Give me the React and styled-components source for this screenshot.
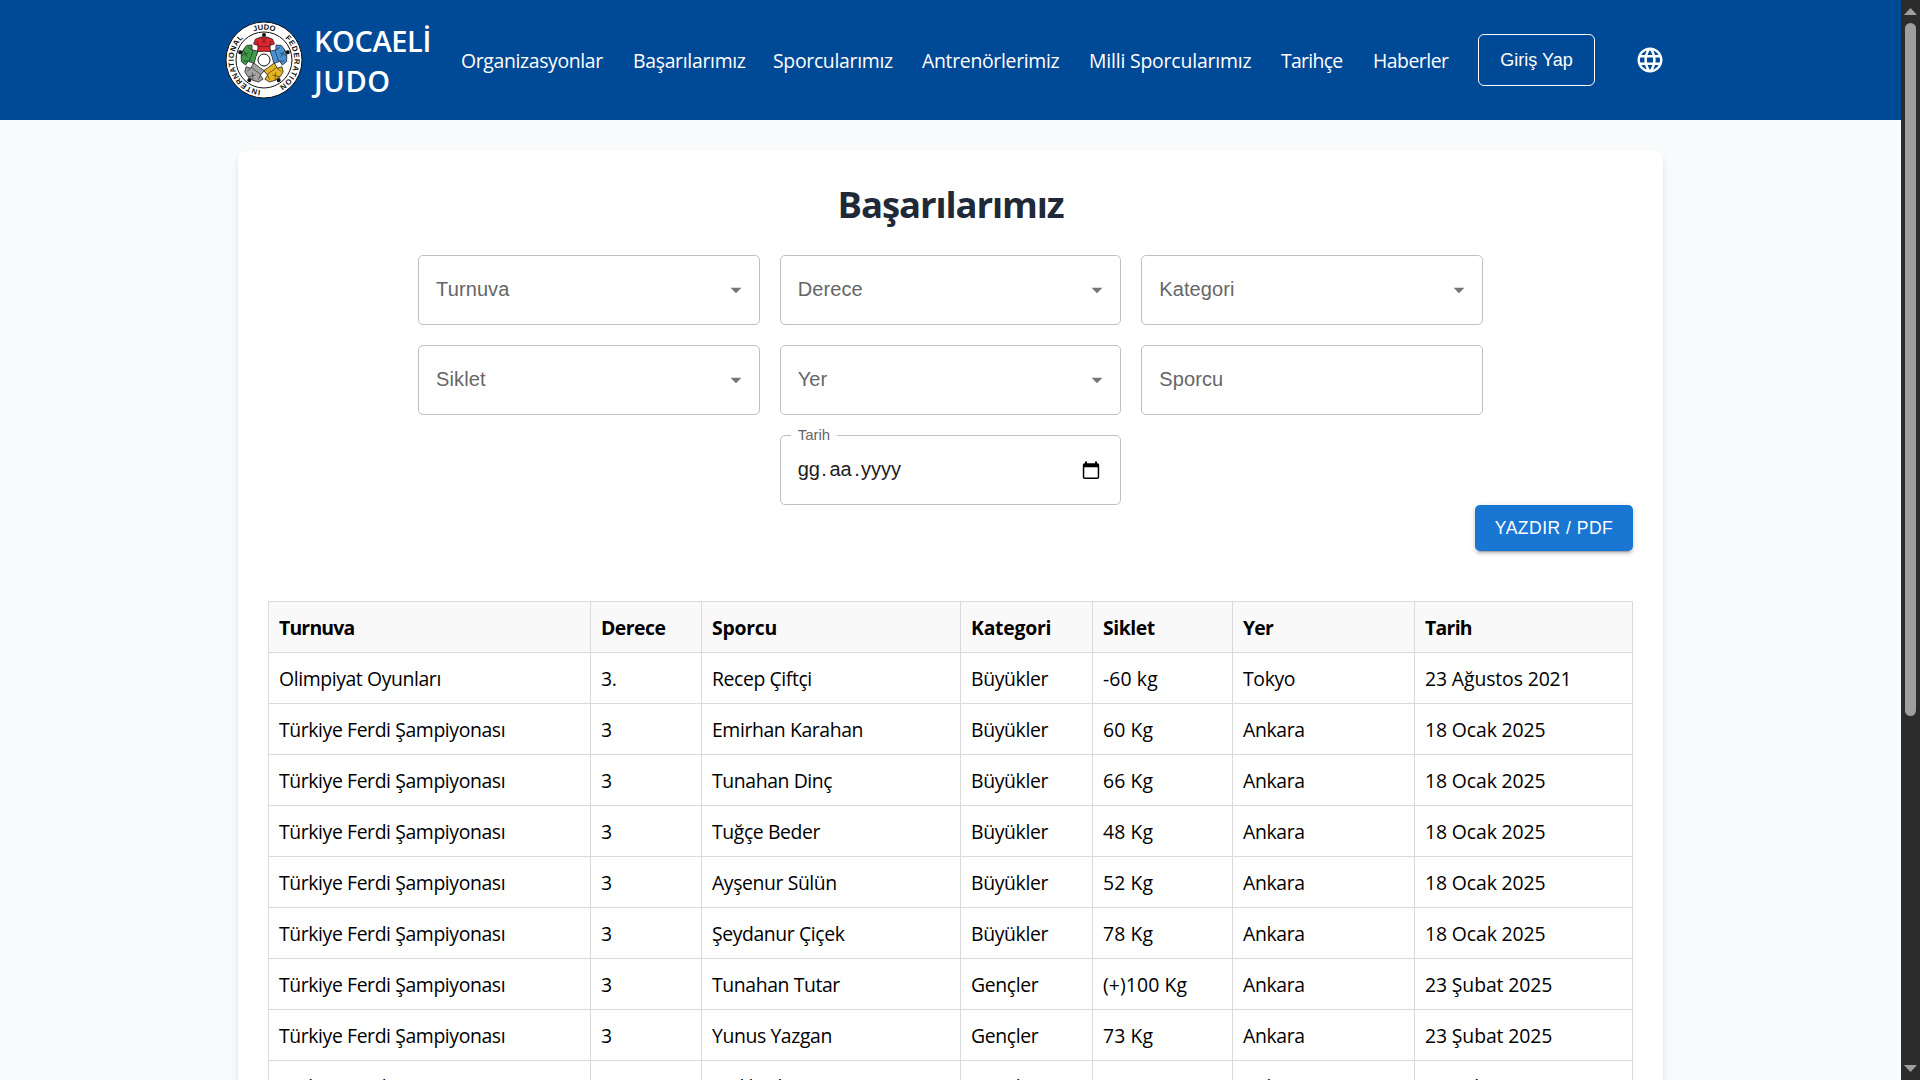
import React from "react";
import styled, { createGlobalStyle } from "styled-components";

const ui = `"Open Sans", "Noto Sans", sans-serif`;
const arial = `"Liberation Sans", Arial, sans-serif`;

const GlobalStyle = createGlobalStyle`
  *, *::before, *::after { box-sizing: border-box; }
  html, body { margin: 0; padding: 0; overflow: hidden; }
`;

const Window = styled.div`
  display: flex;
  width: 1920px;
  height: 1080px;
  overflow: hidden;
  font-family: ${ui};
`;

const Page = styled.div`
  flex: 1;
  min-width: 0;
  background: #f9fafc;
  overflow: hidden;
`;

const Header = styled.header`
  display: flex;
  align-items: center;
  height: 120px;
  padding-left: 225px;
  background: #004996;
  color: #fff;
`;

const Brand = styled.div`
  display: flex;
  align-items: center;
  gap: 11px;
  width: 236px;
`;

const BrandName = styled.div`
  display: flex;
  flex-direction: column;
  margin-top: 2px;
  font-size: 29px;
  font-weight: 600;
  line-height: 40px;
`;

const BrandLine = styled.span`
  letter-spacing: ${(p) => p.$spacing}px;
`;

const Nav = styled.nav`
  display: flex;
  gap: 30px;
  margin-top: 1px;
`;

const NavLink = styled.a`
  width: ${(p) => p.$width}px;
  font-size: 19.4px;
  line-height: 30px;
  letter-spacing: ${(p) => p.$spacing ?? -0.3}px;
  white-space: nowrap;
  color: #fff;
`;

const LoginButton = styled.button`
  width: 117px;
  height: 52px;
  margin-left: 30px;
  padding: 0;
  border: 1px solid #fff;
  border-radius: 6px;
  background: transparent;
  color: #fff;
  font: 400 18px ${arial};
`;

const Globe = styled.svg`
  width: 30px;
  height: 30px;
  margin-left: 40px;
  fill: #fff;
`;

const Card = styled.main`
  width: 1425px;
  height: 1400px;
  margin: 30px 0 0 238px;
  padding: 30px 30px 0;
  border-radius: 10px;
  background: #fff;
  box-shadow: 0 5px 8px -1px rgba(0, 0, 0, 0.1), 0 2px 5px -1px rgba(0, 0, 0, 0.06);
`;

const Title = styled.h1`
  margin: -1px 0 26px;
  font-size: 36.5px;
  font-weight: 700;
  line-height: 50px;
  letter-spacing: -1.1px;
  text-align: center;
  color: #1f2937;
`;

const Filters = styled.div`
  display: flex;
  flex-wrap: wrap;
  justify-content: center;
  gap: 20px;
  width: 1065px;
  margin: 0 auto;
`;

const Field = styled.div`
  position: relative;
  display: flex;
  align-items: center;
  justify-content: space-between;
  width: 341.6px;
  height: 70px;
  padding: 0 10px 0 17px;
  border: 1px solid #c0c0c0;
  border-radius: 5px;
  font-family: ${arial};
  font-size: 20px;
  line-height: 28px;
  color: #666;
`;

const FieldLabel = styled.span`
  margin-top: -2px;
  letter-spacing: 0.1px;
`;

const Arrow = styled.svg`
  width: 26px;
  height: 26px;
  fill: #757575;
`;

const FloatingLabel = styled.span`
  position: absolute;
  top: -10px;
  left: 10px;
  padding: 0 7px;
  background: #fff;
  font-size: 15px;
  line-height: 18px;
`;

const DateValue = styled.span`
  display: flex;
  margin-top: -2px;
  color: #212121;
`;

const DatePart = styled.span`
  padding: 0 1.3px;
`;

const CalendarIcon = styled.svg`
  width: 20px;
  height: 20px;
  margin-right: 9px;
`;

const Actions = styled.div`
  display: flex;
  justify-content: flex-end;
  height: 96px;
`;

const PrintButton = styled.button`
  width: 158px;
  height: 46px;
  padding: 0;
  border: 0;
  border-radius: 5px;
  background: #1976d2;
  box-shadow: 0 4px 1px -3px rgba(0, 0, 0, 0.2), 0 3px 3px rgba(0, 0, 0, 0.14), 0 1px 6px rgba(0, 0, 0, 0.12);
  color: #fff;
  font: 400 17.5px ${arial};
  letter-spacing: 0.5px;
`;

const Table = styled.table`
  width: 1364px;
  table-layout: fixed;
  border-collapse: collapse;
  font-size: 19.4px;
  line-height: 30px;
  color: #000;
`;

const Th = styled.th`
  height: 51px;
  padding: 2px 10px 0;
  border: 1px solid #dadada;
  background: #f9f9f9;
  font-weight: 700;
  letter-spacing: ${(p) => p.$spacing}px;
  text-align: left;
`;

const Td = styled.td`
  height: 51px;
  padding: 2px 10px 0;
  border: 1px solid #dadada;
  letter-spacing: ${(p) => p.$spacing}px;
  white-space: nowrap;
`;

const ScrollTrack = styled.div`
  display: flex;
  flex-direction: column;
  align-items: center;
  width: 19px;
  height: 1080px;
  padding: 8px 0;
  background: #2c2c2c;
`;

const ScrollThumb = styled.div`
  width: 11px;
  height: 693px;
  margin: 8px 0 auto;
  border-radius: 6px;
  background: #9f9f9f;
`;

const ScrollArrow = styled.svg`
  width: 13px;
  height: 7px;
  fill: #9f9f9f;
`;

const navItems = [
  { label: "Organizasyonlar", width: 142, spacing: -0.35 },
  { label: "Başarılarımız", width: 110 },
  { label: "Sporcularımız", width: 119 },
  { label: "Antrenörlerimiz", width: 137 },
  { label: "Milli Sporcularımız", width: 162, spacing: -0.18 },
  { label: "Tarihçe", width: 62, spacing: -0.7 },
  { label: "Haberler", width: 75, spacing: -0.5 },
];

const columns = [
  { name: "Turnuva", width: 322, head: -0.8, body: -0.4 },
  { name: "Derece", width: 111, head: -0.5, body: -0.25 },
  { name: "Sporcu", width: 259, head: -0.25, body: -0.4 },
  { name: "Kategori", width: 132, head: -0.25, body: -0.35 },
  { name: "Siklet", width: 140, head: -0.45, body: 0.1 },
  { name: "Yer", width: 182, head: -0.8, body: -0.35 },
  { name: "Tarih", width: 218, head: -0.7, body: -0.12 },
];

const champ = "Türkiye Ferdi Şampiyonası";
const rows = [
  ["Olimpiyat Oyunları", "3.", "Recep Çiftçi", "Büyükler", "-60 kg", "Tokyo", "23 Ağustos 2021"],
  [champ, "3", "Emirhan Karahan", "Büyükler", "60 Kg", "Ankara", "18 Ocak 2025"],
  [champ, "3", "Tunahan Dinç", "Büyükler", "66 Kg", "Ankara", "18 Ocak 2025"],
  [champ, "3", "Tuğçe Beder", "Büyükler", "48 Kg", "Ankara", "18 Ocak 2025"],
  [champ, "3", "Ayşenur Sülün", "Büyükler", "52 Kg", "Ankara", "18 Ocak 2025"],
  [champ, "3", "Şeydanur Çiçek", "Büyükler", "78 Kg", "Ankara", "18 Ocak 2025"],
  [champ, "3", "Tunahan Tutar", "Gençler", "(+)100 Kg", "Ankara", "23 Şubat 2025"],
  [champ, "3", "Yunus Yazgan", "Gençler", "73 Kg", "Ankara", "23 Şubat 2025"],
  [champ, "3", "Melikşah Demir", "Gençler", "81 Kg", "Ankara", "23 Şubat 2025"],
];

const athletes = [
  [0, "#d9252c"],
  [72, "#4b92d4"],
  [144, "#e2b322"],
  [216, "#a3a3a3"],
  [288, "#3f9b48"],
];

function Logo() {
  return (
    <svg width="78" height="78" viewBox="-39 -39 78 78">
      <circle r="38" fill="#fff" stroke="#111" strokeWidth="1" />
      <circle r="28" fill="none" stroke="#111" strokeWidth="1" />
      <path id="ring" d="M0 30.3 A30.3 30.3 0 0 1 0 -30.3 A30.3 30.3 0 0 1 0 30.3" fill="none" />
      <g fontFamily="Liberation Sans, Arial, sans-serif" fontSize="7.6" fontWeight="700" fill="#111">
        <text textLength="69"><textPath href="#ring" startOffset="3.4" textLength="69">INTERNATIONAL</textPath></text>
        <text textLength="21.5"><textPath href="#ring" startOffset="84.5" textLength="21.5">JUDO</textPath></text>
        <text textLength="56"><textPath href="#ring" startOffset="118" textLength="56">FEDERATION</textPath></text>
      </g>
      {athletes.map(([angle, color]) => (
        <g key={angle} transform={`rotate(${angle})`}>
          <path
            d="M-3 -23 L3 -23 L8.5 -21 L10.5 -16 L6 -14.5 L6.5 -8.5 L-6.5 -8.5 L-6 -14.5 L-10.5 -16 L-8.5 -21 Z"
            fill={color}
            stroke="#1a1a1a"
            strokeWidth=".7"
          />
          <path d="M-3 -23 L2 -17 M3 -23 L-2 -17 M-6 -13.5 H6 M-6 -14.5 L-7 -19 M6 -14.5 L7 -19" stroke="#1a1a1a" strokeWidth=".5" fill="none" />
          <circle cy="-25" r="2" fill="#111" />
        </g>
      ))}
      <circle r="8.2" fill="#fff" />
      <circle r="6" fill="#fff" stroke="#111" strokeWidth="1" />
    </svg>
  );
}

function SelectField({ label, plain }) {
  return (
    <Field>
      <FieldLabel>{label}</FieldLabel>
      {!plain && (
        <Arrow viewBox="0 0 24 24">
          <path d="M7 10l5 5 5-5z" />
        </Arrow>
      )}
    </Field>
  );
}

export default function App() {
  return (
    <Window>
      <GlobalStyle />
      <Page>
        <Header>
          <Brand>
            <Logo />
            <BrandName>
              <BrandLine $spacing={-0.4}>KOCAELİ</BrandLine>
              <BrandLine $spacing={0.6}>JUDO</BrandLine>
            </BrandName>
          </Brand>
          <Nav>
            {navItems.map((item) => (
              <NavLink key={item.label} $width={item.width} $spacing={item.spacing}>
                {item.label}
              </NavLink>
            ))}
          </Nav>
          <LoginButton>Giriş Yap</LoginButton>
          <Globe viewBox="0 0 24 24">
            <path d="M11.99 2C6.47 2 2 6.48 2 12s4.47 10 9.99 10C17.52 22 22 17.52 22 12S17.52 2 11.99 2zm6.93 6h-2.95c-.32-1.25-.78-2.45-1.38-3.56 1.84.63 3.37 1.91 4.33 3.56zM12 4.04c.83 1.2 1.48 2.53 1.91 3.96h-3.82c.43-1.43 1.08-2.76 1.91-3.96zM4.26 14C4.1 13.36 4 12.69 4 12s.1-1.36.26-2h3.38c-.08.66-.14 1.32-.14 2s.06 1.34.14 2H4.26zm.82 2h2.95c.32 1.25.78 2.45 1.38 3.56-1.84-.63-3.37-1.9-4.33-3.56zm2.95-8H5.08c.96-1.66 2.49-2.93 4.33-3.56C8.81 5.55 8.35 6.75 8.03 8zM12 19.96c-.83-1.2-1.48-2.53-1.91-3.96h3.82c-.43 1.43-1.08 2.76-1.91 3.96zM14.34 14H9.66c-.09-.66-.16-1.32-.16-2s.07-1.35.16-2h4.68c.09.65.16 1.32.16 2s-.07 1.34-.16 2zm.25 5.56c.6-1.11 1.06-2.31 1.38-3.56h2.95c-.96 1.65-2.49 2.93-4.33 3.56zM16.36 14c.08-.66.14-1.32.14-2s-.06-1.34-.14-2h3.38c.16.64.26 1.31.26 2s-.1 1.36-.26 2h-3.38z" />
          </Globe>
        </Header>
        <Card>
          <Title>Başarılarımız</Title>
          <Filters>
            <SelectField label="Turnuva" />
            <SelectField label="Derece" />
            <SelectField label="Kategori" />
            <SelectField label="Siklet" />
            <SelectField label="Yer" />
            <SelectField label="Sporcu" plain />
            <Field>
              <FloatingLabel>Tarih</FloatingLabel>
              <DateValue>
                <span>gg</span>
                <DatePart>.</DatePart>
                <DatePart>aa</DatePart>
                <DatePart>.</DatePart>
                <span>yyyy</span>
              </DateValue>
              <CalendarIcon viewBox="0 0 20 20">
                <path d="M4 1.5h2v1.7h8V1.5h2v1.7h.4A1.8 1.8 0 0 1 18.2 5v12.2a1.8 1.8 0 0 1-1.8 1.8H3.6a1.8 1.8 0 0 1-1.8-1.8V5a1.8 1.8 0 0 1 1.8-1.8H4zM3.3 7.2v10.3h13.4V7.2z" fill="#000" fillRule="evenodd" />
              </CalendarIcon>
            </Field>
          </Filters>
          <Actions>
            <PrintButton>YAZDIR / PDF</PrintButton>
          </Actions>
          <Table>
            <colgroup>
              {columns.map((col) => (
                <col key={col.name} width={col.width} />
              ))}
            </colgroup>
            <thead>
              <tr>
                {columns.map((col) => (
                  <Th key={col.name} $spacing={col.head}>{col.name}</Th>
                ))}
              </tr>
            </thead>
            <tbody>
              {rows.map((row) => (
                <tr key={row[2]}>
                  {row.map((cell, i) => (
                    <Td key={columns[i].name} $spacing={columns[i].body}>{cell}</Td>
                  ))}
                </tr>
              ))}
            </tbody>
          </Table>
        </Card>
      </Page>
      <ScrollTrack>
        <ScrollArrow viewBox="0 0 13 7">
          <path d="M0 7L6.5 0L13 7z" />
        </ScrollArrow>
        <ScrollThumb />
        <ScrollArrow viewBox="0 0 13 7">
          <path d="M0 0L6.5 7L13 0z" />
        </ScrollArrow>
      </ScrollTrack>
    </Window>
  );
}
